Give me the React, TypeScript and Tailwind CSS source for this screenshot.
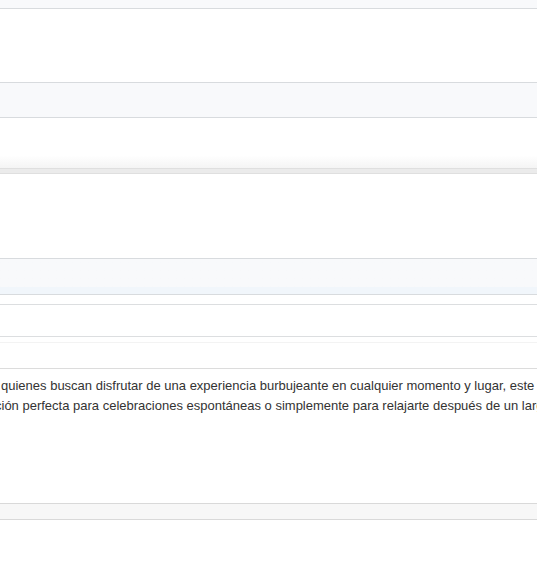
import React from 'react';

const font = { fontFamily: '"Liberation Sans", Arial, sans-serif' };

const Description: React.FC = () => (
  <div className="h-[134px] overflow-hidden pt-[7px] text-[13px] leading-[20px] text-[#333]" style={font}>
    <div className="whitespace-nowrap pl-[1px]">
      quienes buscan disfrutar de una experiencia burbujeante en cualquier momento y lugar, este
    </div>
    <div className="whitespace-nowrap -ml-[5px]">
      ción perfecta para celebraciones espontáneas o simplemente para relajarte después de un largo día.
    </div>
  </div>
);

export default function App() {
  return (
    <div className="w-[537px] h-[572px] overflow-hidden bg-white">
      {/* top bar tail */}
      <div className="h-[9px] bg-[#f8f9fb] border-b border-[#d8dbde]" />
      <div className="h-[73px] bg-white" />

      {/* header row */}
      <div className="h-[36px] bg-[#f8f9fb] border-y border-[#d8dbde]" />
      <div className="h-[50px] bg-gradient-to-b from-white from-75% to-[#f4f4f4]" />

      {/* section divider */}
      <div className="h-[6px] bg-[#ebebeb] border-y border-[#dfdfdf]" />
      <div className="h-[84px] bg-white" />

      {/* second header row */}
      <div className="h-[37px] border-y border-[#d8dbde] bg-gradient-to-b from-[#f8f9fb] from-80% to-[#f1f6fb] to-80%" />
      <div className="h-[9px] bg-white" />
      <div className="h-[33px] bg-white border-y border-[#dcdee0]" />
      <div className="h-[6px] border-b border-[#f3f3f3]" />
      <div className="h-[26px] border-b border-[#dcdcdc]" />

      <Description />

      <div className="h-[17px] bg-[#f7f7f7] border-y border-[#d9d9d9]" />
    </div>
  );
}
